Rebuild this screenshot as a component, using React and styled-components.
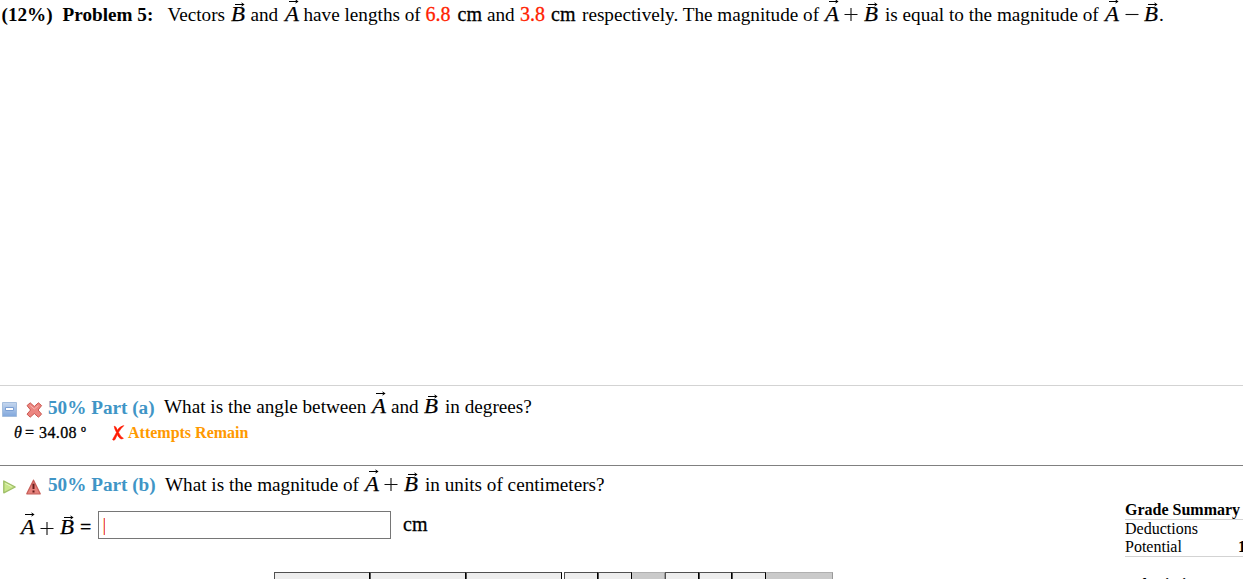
import React from "react"
import styled, { createGlobalStyle } from "styled-components"

const GlobalStyle = createGlobalStyle`
  * {
    box-sizing: border-box;
  }
  html, body {
    margin: 0;
    padding: 0;
    height: 579px;
    overflow: hidden;
    background: #fff;
  }
  body {
    color: #000;
    font-family: "Liberation Serif", "Times New Roman", serif;
    font-size: 16px;
  }
`

const Page = styled.main`
  display: flex;
  flex-direction: column;
  width: 1243px;
  height: 579px;
  overflow: hidden;
`
const Statement = styled.header`
  height: 385px;
  flex: none;
  padding: 3px 0 0 1.5px;
`
const Line = styled.div`
  display: flex;
  align-items: baseline;
  height: 22px;
  line-height: 22px;
  font-size: 19.2px;
  white-space: pre;
`
const Run = styled.span`
  flex: none;
  width: ${props => props.$w}px;
  letter-spacing: ${props => props.$ls || 0}px;
`
const Label = styled(Run)`
  font-weight: bold;
`
const PartLabel = styled(Label)`
  color: #4095c6;
  align-self: flex-start;
  padding-top: ${props => props.$drop}px;
`
const MathRun = styled(Run)`
  font-size: 20px;
  color: ${props => props.$color || "#000"};
  -webkit-text-stroke: 0.3px currentColor;
`
const VectorBox = styled.span`
  position: relative;
  flex: none;
  width: ${props => props.$w}px;
  font-size: 20px;
  font-style: italic;

  & > span {
    display: inline-block;
    transform: scaleX(1.14);
    transform-origin: 0 0;
    -webkit-text-stroke: 0.25px #000;
  }
`
const Arrow = styled.svg`
  position: absolute;
  left: 4px;
  top: ${props => (props.$tall ? -4 : -1)}px;
`
const Operator = styled.svg`
  flex: none;
  align-self: center;
  margin-right: ${props => props.$gap}px;
`
const PartA = styled.section`
  flex: none;
  height: 80px;
  border-top: 1px solid #d3d3d3;
  padding-top: 9px;
`
const PartB = styled.section`
  flex: none;
  height: 114px;
  border-top: 1px solid #808080;
  display: flex;
`
const Work = styled.div`
  width: 1124px;
  flex: none;
  padding-top: 7px;
`
const Icons = styled.span`
  display: flex;
  flex: none;
  align-self: flex-start;
  width: 48px;
  height: 22px;
  padding: ${props => props.$top}px 0 0 2px;
  gap: 8px;
`
const Result = styled.div`
  display: flex;
  align-items: baseline;
  height: 20px;
  line-height: 20px;
  margin-top: 6px;
  padding-left: 14px;
  white-space: pre;
`
const Small = styled(Run)`
  font-style: ${props => (props.$italic ? "italic" : "normal")};
  -webkit-text-stroke: 0.3px #000;
`
const Cross = styled.svg`
  flex: none;
  align-self: flex-start;
  margin: 2px 3px 0 0;
`
const Remain = styled.span`
  color: #ff9900;
  font-weight: bold;
`
const AnswerRow = styled.div`
  display: flex;
  height: 28px;
  margin-top: 16px;
  padding-left: 21px;
`
const Equation = styled(Line)`
  width: 77px;
  flex: none;
  padding-top: 5px;
  height: 28px;
`
const AnswerField = styled.div`
  width: 293px;
  height: 28px;
  flex: none;
  border: 1px solid #767676;
  padding: 6px 0 0 4px;
`
const Caret = styled.div`
  width: 2px;
  height: 17px;
  border-left: 1px solid #ffd58a;
  border-right: 1px solid #e8527c;
`
const Unit = styled(MathRun)`
  padding: 2px 0 0 12px;
  line-height: 22px;
`
const Keypad = styled.div`
  display: flex;
  margin: 33px 0 0 274px;
  height: 7px;
`
const Key = styled.div`
  width: ${props => props.$w}px;
  height: 7px;
  flex: none;
  margin-right: ${props => props.$gap || 0}px;
  background: ${props => (props.$blank ? "#cacaca" : "#ededed")};
  border-top: 1px solid ${props => (props.$blank ? "#b0b0b0" : "#505050")};
  border-left: 1px solid ${props => (props.$blank ? "#cacaca" : "#505050")};
  border-right: 1px solid ${props => (props.$blank ? "#999" : "#000")};
`
const Summary = styled.aside`
  flex: none;
  width: 150px;
  padding: 34px 0 0;
  margin-left: 1px;
  font-size: 16px;
`
const SummaryTitle = styled.div`
  height: 20px;
  line-height: 19px;
  font-weight: bold;
  border-bottom: 1px solid #d3d3d3;
`
const SummaryRow = styled.div`
  display: flex;
  height: 18px;
  line-height: 18px;

  & > b {
    margin-left: 56px;
  }
`
const SummaryTotals = styled.div`
  height: 37px;
  border-bottom: 1px solid #d3d3d3;
`
const Submissions = styled.div`
  margin-top: 19px;
  line-height: 18px;
  font-weight: bold;
`

const Vector = ({ name, w }) => (
  <VectorBox $w={w}>
    <Arrow $tall={name === "A"} width="10" height="5" viewBox="0 0 10 5">
      <path d="M0 2.5H8.5" stroke="#000" fill="none" />
      <path d="M6.2 .3 9.6 2.5 6.2 4.7 7.2 2.5z" />
    </Arrow>
    <span>{name}</span>
  </VectorBox>
)

const Plus = ({ gap = 6 }) => (
  <Operator $gap={gap} width="14" height="14" viewBox="0 0 14 14">
    <path d="M.5 7.5H13.5M7 1V14" stroke="#111" strokeWidth="1.1" />
  </Operator>
)

const Minus = () => (
  <Operator $gap={5} width="14" height="14" viewBox="0 0 14 14">
    <path d="M.5 7.5H13.5" stroke="#111" strokeWidth="1.1" />
  </Operator>
)

const CollapseIcon = () => (
  <svg width="16" height="16" viewBox="0 0 16 16">
    <defs>
      <linearGradient id="blue" x2="0" y2="1">
        <stop stopColor="#c6d7ee" />
        <stop offset="1" stopColor="#80a7dc" />
      </linearGradient>
    </defs>
    <path d="M.5 .5H14.5V14.5H.5z" fill="url(#blue)" stroke="#a4bddd" />
    <path d="M3.5 5.5H11.5V8.5H3.5z" fill="#fff" stroke="#7b9fd4" />
  </svg>
)

const WrongIcon = () => (
  <svg width="17" height="16" viewBox="0 0 17 16">
    <path
      d="M4.2 .8 8.3 4.5 12.4 .8 15.6 3.6 12.1 8 15.6 12.2 12.4 15.2 8.3 11.5 4.2 15.2 1 12.2 4.6 8 1 3.6z"
      fill="#ec8580"
      stroke="#c9574f"
      strokeLinejoin="round"
    />
    <path d="M4.3 3.6 8.3 7 12.3 3.6" stroke="#f7b5af" fill="none" />
  </svg>
)

const PlayIcon = () => (
  <svg width="16" height="16" viewBox="0 0 16 16">
    <path d="M1.8 2 13.2 8 1.8 13.8z" fill="#c9e68b" stroke="#9fbf68" strokeWidth="1.4" strokeLinejoin="round" />
    <path d="M3.4 4.5 9.5 7.6" stroke="#e7f6c5" />
  </svg>
)

const WarningIcon = () => (
  <svg width="16" height="16" viewBox="0 0 16 16">
    <path d="M7.5 1.2 14.2 14.8H.8z" fill="#e6817b" stroke="#c85f59" strokeWidth="1.3" strokeLinejoin="round" />
    <path d="M7.5 4.8V10M7.5 11.5V13.4" stroke="#651b1b" strokeWidth="2" />
  </svg>
)

const keys = [
  { w: 96 },
  { w: 96 },
  { w: 96, gap: 2 },
  { w: 34 },
  { w: 34 },
  { w: 33, blank: true },
  { w: 34 },
  { w: 33 },
  { w: 34 },
  { w: 67, blank: true },
]

export default function App() {
  return (
    <Page>
      <GlobalStyle />
      <Statement>
        <Line>
          <Label $w={61}>(12%)</Label>
          <Label $w={105}>Problem 5:</Label>
          <Run $w={63}>Vectors</Run>
          <Vector name="B" w={20} />
          <Run $w={34}>and</Run>
          <Vector name="A" w={19} />
          <Run $w={122}>have lengths of</Run>
          <MathRun $w={32} $color="#ff1e00">6.8</MathRun>
          <MathRun $w={29.5}>cm</MathRun>
          <Run $w={33}>and</Run>
          <MathRun $w={31} $color="#ff1e00">3.8</MathRun>
          <MathRun $w={31}>cm</MathRun>
          <Run $w={242.5}>respectively. The magnitude of</Run>
          <Vector name="A" w={19} />
          <Plus />
          <Vector name="B" w={21.5} />
          <Run $w={220}>is equal to the magnitude of</Run>
          <Vector name="A" w={19.5} />
          <Minus />
          <Vector name="B" w={15.5} />
          <Run $w={8}>.</Run>
        </Line>
      </Statement>
      <PartA>
        <Line>
          <Icons $top={7}>
            <CollapseIcon />
            <WrongIcon />
          </Icons>
          <PartLabel $w={116} $drop={1.5}>50% Part (a)</PartLabel>
          <Run $w={208}>What is the angle between</Run>
          <Vector name="A" w={19} />
          <Run $w={33}>and</Run>
          <Vector name="B" w={21} />
          <Run $w={100}>in degrees?</Run>
        </Line>
        <Result>
          <Small $w={11} $italic>θ</Small>
          <Small $w={14}>=</Small>
          <Small $w={42} $ls={0.4}>34.08</Small>
          <Small $w={31}>º</Small>
          <Cross width="13" height="16" viewBox="0 0 13 16">
            <path d="M2.2 1.2Q4 1 5.3 5.2Q8 1.3 11.8 .6Q8.8 3.5 6.5 7.3Q8.5 12.2 11.4 13.3Q8 15.5 5.3 9.6L3 14.6Q1.5 15.8 .6 14.6L4.5 7.4Q2.4 3.6 2.2 1.2z" fill="#ff1a00" stroke="#ff1a00" strokeWidth=".6" />
          </Cross>
          <Remain>Attempts Remain</Remain>
        </Result>
      </PartA>
      <PartB>
        <Work>
          <Line>
            <Icons $top={6}>
              <PlayIcon />
              <WarningIcon />
            </Icons>
            <PartLabel $w={117} $drop={0.5}>50% Part (b)</PartLabel>
            <Run $w={200}>What is the magnitude of</Run>
            <Vector name="A" w={19} />
            <Plus />
            <Vector name="B" w={21} />
            <Run $w={190}>in units of centimeters?</Run>
          </Line>
          <AnswerRow>
            <Equation>
              <Vector name="A" w={19} />
              <Plus />
              <Vector name="B" w={20} />
              <MathRun $w={14}>=</MathRun>
            </Equation>
            <AnswerField>
              <Caret />
            </AnswerField>
            <Unit $w={50}>cm</Unit>
          </AnswerRow>
          <Keypad>
            {keys.map((key, i) => (
              <Key key={i} $w={key.w} $gap={key.gap} $blank={key.blank} />
            ))}
          </Keypad>
        </Work>
        <Summary>
          <SummaryTitle>Grade Summary</SummaryTitle>
          <SummaryTotals>
            <SummaryRow>Deductions</SummaryRow>
            <SummaryRow>
              Potential<b>100%</b>
            </SummaryRow>
          </SummaryTotals>
          <Submissions>Submissions</Submissions>
        </Summary>
      </PartB>
    </Page>
  )
}
